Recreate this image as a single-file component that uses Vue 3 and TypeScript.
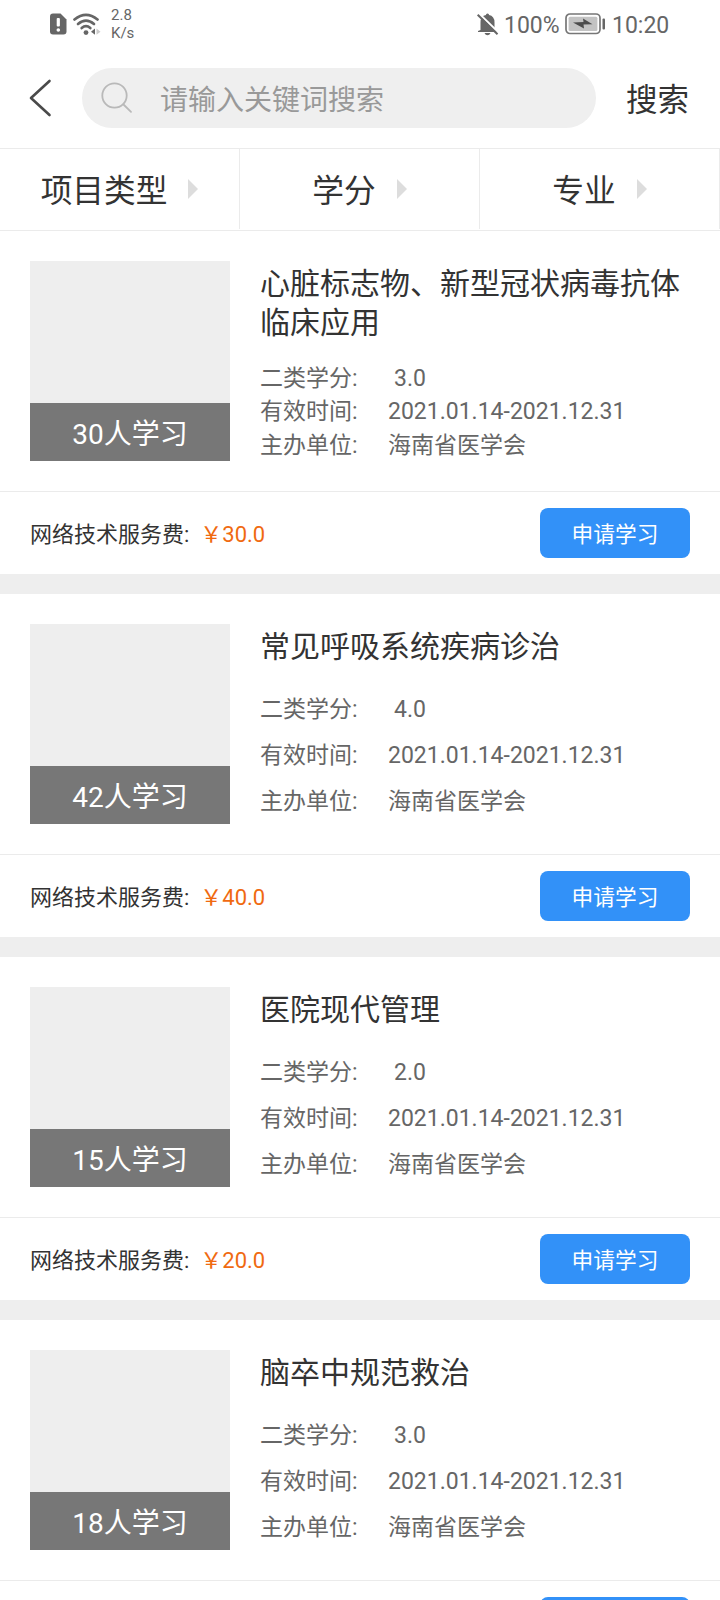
<script setup lang="ts">
interface Course {
  title: string
  credit: string
  period: string
  host: string
  learners: number
  fee: string
}

const tabs: string[] = ['项目类型', '学分', '专业']

const period = '2021.01.14-2021.12.31'
const host = '海南省医学会'

const courses: Course[] = [
  { title: '心脏标志物、新型冠状病毒抗体临床应用', credit: '3.0', period, host, learners: 30, fee: '30.0' },
  { title: '常见呼吸系统疾病诊治', credit: '4.0', period, host, learners: 42, fee: '40.0' },
  { title: '医院现代管理', credit: '2.0', period, host, learners: 15, fee: '20.0' },
  { title: '脑卒中规范救治', credit: '3.0', period, host, learners: 18, fee: '30.0' },
]
</script>

<template>
  <div class="screen">
    <header class="status">
      <svg class="sim" width="17" height="22" viewBox="0 0 17 22">
        <path d="M3 0.5H10.5L16.5 6.5V18.5Q16.5 21.5 13.5 21.5H3Q0 21.5 0 18.5V3.5Q0 0.5 3 0.5Z" fill="#666" />
        <rect x="6.7" y="5" width="3.2" height="8.5" rx="1" fill="#fff" />
        <circle cx="8.3" cy="17" r="1.8" fill="#fff" />
      </svg>
      <svg class="wifi" width="28" height="23" viewBox="0 0 28 23">
        <g fill="none" stroke="#666" stroke-width="2.7" stroke-linecap="round">
          <path d="M1.5 6.5Q13 -2.8 24.5 6.5" />
          <path d="M5 11Q13 4.2 21 11" />
          <path d="M8.700 15Q13 11.3 17.300 15" />
        </g>
        <circle cx="13" cy="19.6" r="2.4" fill="#666" />
        <path d="M22 15.5V21.8L18 18.7Z" fill="#666" />
        <path d="M23.500 15.5V21.8L27.500 18.7Z" fill="#ccc" />
      </svg>
      <div class="speed"><span>2.8</span><span>K/s</span></div>
      <svg class="bell" width="22" height="23" viewBox="0 0 22 23">
        <path d="M3.5 17V9.5Q3.5 3 9 2V1.5Q10.5 -0.3 12 1.5V2Q17.5 3 17.5 9.5V15L20 18V19H1V18Z" fill="#666" />
        <path d="M7.5 20H13.5Q12.5 22.3 10.5 22.3Q8.5 22.3 7.5 20Z" fill="#666" />
        <path d="M1.5 0L22 20" stroke="#fff" stroke-width="2" />
        <path d="M0.7 1.7L20.5 21.2" stroke="#666" stroke-width="2" />
      </svg>
      <span class="percent">100%</span>
      <svg class="battery" width="41" height="22" viewBox="0 0 41 22">
        <rect x="1" y="1" width="34" height="19.5" rx="4" fill="#fff" stroke="#777" stroke-width="1.7" />
        <rect x="3.6" y="3.7" width="28.8" height="14.2" rx="1.5" fill="#c3c3c3" />
        <path d="M8 9.5L18.5 9L18 5.5L27.5 11.2L18.5 11.5L19 15.5Z" fill="#4c4c4c" />
        <rect x="37.5" y="5.5" width="2.5" height="11" rx="1" fill="#666" />
      </svg>
      <span class="clock">10:20</span>
    </header>

    <div class="searchbar">
      <svg class="back" width="24" height="40" viewBox="0 0 24 40">
        <path d="M20.5 3L2 20L20.5 37" fill="none" stroke="#4a4a4a" stroke-width="2.6" stroke-linecap="round" stroke-linejoin="round" />
      </svg>
      <div class="field">
        <svg width="32" height="32" viewBox="0 0 32 32" fill="none" stroke="#b9b9b9" stroke-width="1.8" stroke-linecap="round">
          <circle cx="13.5" cy="13.5" r="12.2" />
          <path d="M22.5 22.5L30 29.8" />
        </svg>
        <span>请输入关键词搜索</span>
      </div>
      <span class="go">搜索</span>
    </div>

    <nav class="tabs">
      <div v-for="tab in tabs" :key="tab" class="tab">
        <span>{{ tab }}</span><i class="arrow"></i>
      </div>
    </nav>

    <main>
      <article v-for="course in courses" :key="course.title" class="card">
        <div class="body">
          <div class="thumb"><div class="learners">{{ course.learners }}人学习</div></div>
          <div class="info">
            <h2>{{ course.title }}</h2>
            <dl>
              <div class="row"><dt>二类学分:</dt><dd class="credit">{{ course.credit }}</dd></div>
              <div class="row"><dt>有效时间:</dt><dd>{{ course.period }}</dd></div>
              <div class="row"><dt>主办单位:</dt><dd>{{ course.host }}</dd></div>
            </dl>
          </div>
        </div>
        <div class="foot">
          <span class="label">网络技术服务费:</span>
          <span class="fee">￥{{ course.fee }}</span>
          <button type="button">申请学习</button>
        </div>
      </article>
    </main>
  </div>
</template>

<style>
body {
  margin: 0;
  background: #fff;
}
</style>

<style scoped>
.screen {
  width: 720px;
  height: 1600px;
  overflow: hidden;
  background: #fff;
  color: #333;
  font-family: Roboto, 'Noto Sans CJK SC', sans-serif;
}

.status {
  height: 48px;
  display: flex;
  align-items: center;
  box-sizing: border-box;
  padding: 0 50px;
  color: #666;
  font-size: 23px;
}

.status svg {
  flex: none;
}

.wifi {
  margin-left: 6px;
}

.speed {
  display: flex;
  flex-direction: column;
  margin-left: 10px;
  font-size: 15px;
  line-height: 18px;
}

.bell {
  margin-left: auto;
}

.percent {
  margin-left: 5px;
  width: 61px;
  line-height: 48px;
  padding-top: 3px;
}

.clock {
  width: 58px;
  margin-left: 6px;
  line-height: 48px;
  padding-top: 3px;
}

.searchbar {
  display: flex;
  align-items: center;
  height: 100px;
}

.back {
  margin-left: 29px;
}

.field {
  width: 514px;
  height: 60px;
  margin-left: 29px;
  border-radius: 30px;
  background: #efefef;
  display: flex;
  align-items: center;
  box-sizing: border-box;
  padding-left: 19px;
}

.field span {
  margin-left: 27px;
  padding-top: 5px;
  font-size: 28px;
  line-height: 40px;
  color: #999;
}

.go {
  margin-left: 30px;
  padding-top: 5px;
  font-size: 31.5px;
  line-height: 46px;
}

.tabs {
  display: flex;
  height: 81px;
  border-top: 1px solid #ebebeb;
  border-bottom: 1px solid #ebebeb;
}

.tab {
  flex: 1;
  height: 80px;
  box-sizing: border-box;
  border-right: 1px solid #ebebeb;
  display: flex;
  align-items: center;
  justify-content: center;
  font-size: 31.7px;
}

.tab span {
  padding-bottom: 3px;
}

.arrow {
  margin-left: 21px;
  border-left: 10px solid #ddd;
  border-top: 10px solid transparent;
  border-bottom: 10px solid transparent;
}

.card {
  border-bottom: 20px solid #eee;
}

.body {
  display: flex;
  padding: 30px;
  height: 200px;
}

.thumb {
  width: 200px;
  height: 200px;
  flex: none;
  background: #eee;
  display: flex;
  align-items: flex-end;
}

.learners {
  width: 100%;
  height: 58px;
  line-height: 63px;
  background: #777;
  color: #fff;
  text-align: center;
  font-size: 28px;
}

.info {
  flex: 1;
  margin-left: 30px;
  display: flex;
  flex-direction: column;
}

h2 {
  margin: 3px 0 0;
  font-size: 30px;
  font-weight: 400;
  line-height: 39px;
}

dl {
  flex: 1;
  margin: 20px 0 -1px;
  display: flex;
  flex-direction: column;
  justify-content: space-around;
  font-size: 23px;
  color: #666;
}

.row {
  display: flex;
  line-height: 33px;
}

dt {
  width: 128px;
}

dd {
  margin: 0;
}

.credit {
  padding-left: 6px;
}

.foot {
  height: 82px;
  display: flex;
  align-items: center;
  border-top: 1px solid #ebebeb;
  padding: 0 30px;
  font-size: 22px;
}

.label,
.fee {
  padding-bottom: 2px;
}

.fee {
  margin-left: 11px;
  color: #f06a10;
}

button {
  margin-left: auto;
  width: 150px;
  height: 50px;
  padding: 0 0 2px;
  border: 0;
  border-radius: 8px;
  background: #3291f8;
  color: #fff;
  font: inherit;
  font-size: 21.7px;
}
</style>
